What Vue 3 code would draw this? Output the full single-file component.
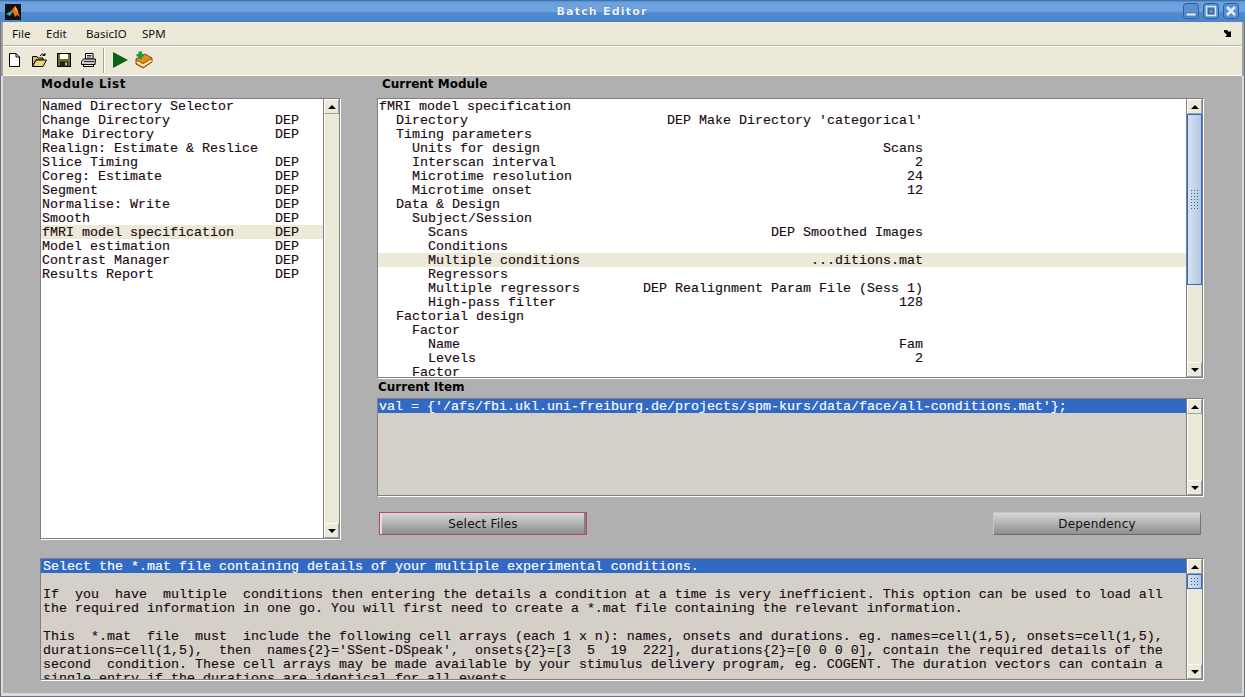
<script setup>
const menus = ['File', 'Edit', 'BasicIO', 'SPM']

const modules = [
  ['Named Directory Selector', ''],
  ['Change Directory', 'DEP'],
  ['Make Directory', 'DEP'],
  ['Realign: Estimate & Reslice', ''],
  ['Slice Timing', 'DEP'],
  ['Coreg: Estimate', 'DEP'],
  ['Segment', 'DEP'],
  ['Normalise: Write', 'DEP'],
  ['Smooth', 'DEP'],
  ['fMRI model specification', 'DEP'],
  ['Model estimation', 'DEP'],
  ['Contrast Manager', 'DEP'],
  ['Results Report', 'DEP'],
]

const settings = [
  ['fMRI model specification', ''],
  ['  Directory', "DEP Make Directory 'categorical'"],
  ['  Timing parameters', ''],
  ['    Units for design', 'Scans'],
  ['    Interscan interval', '2'],
  ['    Microtime resolution', '24'],
  ['    Microtime onset', '12'],
  ['  Data & Design', ''],
  ['    Subject/Session', ''],
  ['      Scans', 'DEP Smoothed Images'],
  ['      Conditions', ''],
  ['      Multiple conditions', '...ditions.mat'],
  ['      Regressors', ''],
  ['      Multiple regressors', 'DEP Realignment Param File (Sess 1)'],
  ['      High-pass filter', '128'],
  ['  Factorial design', ''],
  ['    Factor', ''],
  ['      Name', 'Fam'],
  ['      Levels', '2'],
  ['    Factor', ''],
]

const helpLines = [
  'Select the *.mat file containing details of your multiple experimental conditions.',
  ' ',
  'If  you  have  multiple  conditions then entering the details a condition at a time is very inefficient. This option can be used to load all',
  'the required information in one go. You will first need to create a *.mat file containing the relevant information.',
  ' ',
  'This  *.mat  file  must  include the following cell arrays (each 1 x n): names, onsets and durations. eg. names=cell(1,5), onsets=cell(1,5),',
  "durations=cell(1,5),  then  names{2}='SSent-DSpeak',  onsets{2}=[3  5  19  222], durations{2}=[0 0 0 0], contain the required details of the",
  'second  condition. These cell arrays may be made available by your stimulus delivery program, eg. COGENT. The duration vectors can contain a',
  'single entry if the durations are identical for all events.',
]
</script>

<template>
  <div class="window">
    <header class="titlebar">
      <svg class="app-logo" width="16" height="16" viewBox="0 0 16 16">
        <rect width="16" height="16" fill="#111" />
        <path d="M1 10 L6 7 L8 8 L5 12 Z" fill="#3aa0b0" />
        <path d="M6 7 L10 2 L12 5 L15 13 L12 11 L10 13 L8 8 Z" fill="#e8701a" />
        <path d="M10 2 L12 5 L13 9 L10 6 Z" fill="#f6b02c" />
      </svg>
      <span class="title">Batch Editor</span>
      <div class="win-buttons">
        <svg width="16" height="16" viewBox="0 0 16 16">
          <rect x=".5" y=".5" width="15" height="15" rx="3" fill="#5a90d0" stroke="#2b5c9c" />
          <rect x="3" y="10" width="10" height="3" fill="#dfeaf6" stroke="#2b5c9c" stroke-width=".6" />
        </svg>
        <svg width="16" height="16" viewBox="0 0 16 16">
          <rect x=".5" y=".5" width="15" height="15" rx="3" fill="#5a90d0" stroke="#2b5c9c" />
          <rect x="3.5" y="3.5" width="9" height="9" fill="none" stroke="#dfeaf6" stroke-width="1.4" />
          <rect x="5.5" y="6" width="5" height="4.5" fill="none" stroke="#2b5c9c" />
        </svg>
        <svg width="16" height="16" viewBox="0 0 16 16">
          <rect x=".5" y=".5" width="15" height="15" rx="3" fill="#5a90d0" stroke="#2b5c9c" />
          <path d="M4 4 L12 12 M12 4 L4 12" stroke="#e6eff9" stroke-width="2.6" />
        </svg>
      </div>
    </header>

    <nav class="menubar">
      <span v-for="m in menus" :key="m" class="menu-item">{{ m }}</span>
      <svg class="dock-arrow" width="9" height="8" viewBox="0 0 9 8">
        <path d="M0 0 H3 L5 2 L7 1 V7 H1 L3 5 L0 2 Z" fill="#000" />
      </svg>
    </nav>

    <div class="toolbar">
      <svg width="16" height="16" viewBox="0 0 16 16">
        <path d="M3.5 1.5 H10 L13.5 5 V14.5 H3.5 Z" fill="#fff" stroke="#000" />
        <path d="M10 1.5 V5 H13.5" fill="none" stroke="#000" />
      </svg>
      <svg class="open-icon" width="17" height="16" viewBox="0 0 17 16">
        <path d="M1.5 4.5 H6 L7 6 H12 V8 H5 L1.5 14 Z" fill="#d8c060" stroke="#000" />
        <path d="M1.5 14.5 L5 8 H15.5 L12 14.5 Z" fill="#f0d878" stroke="#000" />
        <path d="M9 4 Q11 0.5 14 3 M14 1 V3.5 H11.5" fill="none" stroke="#000" />
      </svg>
      <svg width="16" height="16" viewBox="0 0 16 16">
        <rect x="1.5" y="1.5" width="13" height="13" fill="#6e6a20" stroke="#000" />
        <rect x="4" y="2" width="8" height="5" fill="#fff" />
        <rect x="4" y="9.5" width="8" height="5" fill="#222" />
        <rect x="9" y="10.5" width="2" height="3" fill="#bbb" />
      </svg>
      <svg width="17" height="16" viewBox="0 0 17 16">
        <path d="M5.5 1.5 H13 V7 H5.5 Z" fill="#fff" stroke="#000" />
        <path d="M3.5 7 H15.5 L15 12.5 H1.5 V9.5 Z" fill="#ccc" stroke="#000" />
        <path d="M3.5 12.5 H13.5 V14.5 H3.5 Z" fill="#fff" stroke="#000" />
        <path d="M7 3.5 H11.5 M7 5 H11.5 M4 9.5 H14" stroke="#000" stroke-width=".8" />
      </svg>
      <i class="tool-sep"></i>
      <svg width="15" height="16" viewBox="0 0 15 16">
        <path d="M0 0 L15 8 L0 16 Z" fill="#0a6414" />
      </svg>
      <svg class="book-icon" width="18" height="18" viewBox="0 0 18 18">
        <path d="M1 8 L10 3 L17 7 V11 L8 17 L1 13 Z" fill="#e88a1c" stroke="#7a4a10" />
        <path d="M2 11 L8 14.5 L16.5 9.5" fill="none" stroke="#f6ead0" stroke-width="1.8" />
        <path d="M1 8.5 L8 12.5 L17 7" fill="none" stroke="#a85f10" />
        <path d="M1.5 3 H3.5 V.5 H7 V3 H9 V5.5 H7 V8 H3.5 V5.5 H1.5 Z" fill="#1f9a34" />
      </svg>
    </div>

    <main class="content">
      <div class="upper">
        <section class="left-col">
          <h2 class="label label-list">Module List</h2>
          <div class="panel panel-list">
            <div class="rows">
              <div
                v-for="(row, i) in modules"
                :key="i"
                class="row"
                :class="{ first: i === 0, active: row[0] === 'fMRI model specification' }"
              >
                <span class="mod-name">{{ row[0] }}</span><span>{{ row[1] }}</span>
              </div>
            </div>
            <div class="scrollbar">
              <div class="arrow up"></div>
              <div class="track"></div>
              <div class="arrow down"></div>
            </div>
          </div>
        </section>

        <section class="right-col">
          <h2 class="label label-module">Current Module</h2>
          <div class="panel panel-module">
            <div class="rows">
              <div
                v-for="(row, i) in settings"
                :key="i"
                class="row setting"
                :class="{ first: i === 0, active: i === 11 }"
              >
                <span>{{ row[0] }}</span><span>{{ row[1] }}</span>
              </div>
            </div>
            <div class="scrollbar">
              <div class="arrow up"></div>
              <div class="thumb module-thumb"><i class="grip tall"></i></div>
              <div class="track"></div>
              <div class="arrow down"></div>
            </div>
          </div>

          <h2 class="label label-item">Current Item</h2>
          <div class="panel panel-item">
            <div class="rows">
              <div class="row selected">val = {'/afs/fbi.ukl.uni-freiburg.de/projects/spm-kurs/data/face/all-conditions.mat'};</div>
            </div>
            <div class="scrollbar">
              <div class="arrow up"></div>
              <div class="track"></div>
              <div class="arrow down"></div>
            </div>
          </div>

          <div class="actions">
            <button class="btn focused">Select Files</button>
            <button class="btn">Dependency</button>
          </div>
        </section>
      </div>

      <div class="panel panel-help">
        <div class="rows">
          <div v-for="(line, i) in helpLines" :key="i" class="row help-row" :class="{ selected: i === 0 }">{{ line }}</div>
        </div>
        <div class="scrollbar">
          <div class="arrow up"></div>
          <div class="thumb help-thumb"><i class="grip"></i></div>
          <div class="track"></div>
          <div class="arrow down"></div>
        </div>
      </div>
    </main>
  </div>
</template>

<style>
html,
body {
  margin: 0;
  height: 697px;
  overflow: hidden;
}
</style>

<style scoped>
.window {
  width: 1245px;
  height: 697px;
  box-sizing: border-box;
  display: flex;
  flex-direction: column;
  background: #9fa3a8;
  border-left: 1px solid #6f7378;
  border-right: 1px solid #6f7378;
  border-bottom: 1px solid #6f7378;
  font-family: "DejaVu Sans", sans-serif;
}

.titlebar {
  height: 22px;
  flex: none;
  margin: 0 -1px;
  padding: 0 5px;
  display: flex;
  align-items: center;
  background: linear-gradient(#2f659f 0, #6a9fdc 2px, #6fa4de 11px, #4f8acd 13px, #4a85c8 22px);
}

.app-logo {
  margin-top: 1px;
}

.title {
  flex: 1;
  text-align: center;
  color: #eef4fa;
  font-size: 11px;
  font-weight: 700;
  letter-spacing: 1.2px;
  text-shadow: 0 0 1px #2b5c9c;
}

.win-buttons {
  display: flex;
  gap: 4px;
  margin-right: 1px;
}

.win-buttons svg {
  display: block;
}

.menubar {
  height: 24px;
  box-sizing: border-box;
  flex: none;
  margin: 0 2px;
  padding-left: 9px;
  display: grid;
  grid-template-columns: 34px 40px 56px 40px 1fr;
  align-items: center;
  background: #ece9d8;
  border-bottom: 1px solid #b9b6a8;
  font-size: 11.5px;
  font-family: "Noto Sans", sans-serif;
  color: #111;
}

.dock-arrow {
  justify-self: end;
  margin-right: 9px;
}

.toolbar {
  height: 30px;
  box-sizing: border-box;
  flex: none;
  margin: 0 2px;
  padding: 0 0 2px 3px;
  display: flex;
  align-items: center;
  gap: 8px;
  background: #ece9d8;
  border-top: 1px solid #fff;
  border-bottom: 1px solid #fff;
}

.open-icon {
  margin-left: 1px;
}

.tool-sep {
  width: 1px;
  height: 25px;
  background: #a8a598;
  border-right: 1px solid #fff;
  margin-left: -2px;
}

.book-icon {
  margin-left: -1px;
}

.content {
  flex: 1;
  min-height: 0;
  padding-left: 37px;
  background: #b0b0b0;
  border-left: 2px solid #dcdcdc;
  border-right: 2px solid #dcdcdc;
  border-bottom: 3px solid #dcdcdc;
  overflow: hidden;
}

.upper {
  display: flex;
  gap: 36px;
}

.left-col {
  width: 301px;
}

.right-col {
  width: 827px;
}

.label {
  margin: 0;
  font-family: "DejaVu Sans", sans-serif;
  font-size: 12px;
  font-weight: 700;
  color: #000;
  padding-left: 1px;
}

.label-list {
  height: 22px;
  line-height: 17px;
  letter-spacing: 0.6px;
}

.label-module {
  height: 22px;
  line-height: 17px;
  padding-left: 5px;
}

.label-item {
  height: 20px;
  line-height: 18px;
}

.panel {
  display: flex;
  box-sizing: border-box;
  border: 1px solid #808080;
  box-shadow: 1px 1px 0 #fff;
  background: #fff;
  font-family: "Liberation Mono", monospace;
  font-size: 13.33px;
  line-height: 16px;
  color: #1a0a14;
  -webkit-text-stroke: 0.15px currentColor;
}

.panel-list {
  height: 441px;
  width: 300px;
}

.panel-module {
  height: 280px;
  width: 826px;
}

.panel-item {
  height: 98px;
  width: 826px;
  background: #d4d0c8;
}

.panel-help {
  height: 122px;
  width: 1163px;
  margin-top: 19px;
  background: #d4d0c8;
}

.rows {
  flex: 1;
  min-width: 0;
  overflow: hidden;
}

.row {
  height: 14px;
  padding-left: 1px;
  white-space: pre;
}

.panel-list .row {
  display: flex;
}

.mod-name {
  width: 233px;
}

.row.first {
  width: fit-content;
  margin-top: -1px;
  margin-left: -1px;
  padding-top: 1px;
  padding-left: 2px;
  padding-right: 2px;
  background: #fff;
}

.setting {
  display: flex;
  justify-content: space-between;
  padding-left: 2px;
  padding-right: 263px;
}

.row.first.setting {
  padding-right: 32px;
}

.help-row {
  padding-left: 2px;
}

.row.active {
  background: #ece9d8;
}

.row.selected {
  background: #316ac5;
  color: #fff;
}

.scrollbar {
  width: 15px;
  flex: none;
  display: flex;
  flex-direction: column;
  background: #ece9d8;
  border-left: 1px solid #808080;
}

.arrow {
  height: 15px;
  flex: none;
  box-sizing: border-box;
  display: flex;
  align-items: center;
  justify-content: center;
  background: #ece9d8;
  border: 1px solid #fff;
  border-right-color: #a0a0a0;
  border-bottom-color: #a0a0a0;
}

.arrow::after {
  content: "";
  border-left: 4px solid transparent;
  border-right: 4px solid transparent;
}

.arrow.up::after {
  border-bottom: 4px solid #000;
}

.arrow.down::after {
  border-top: 4px solid #000;
}

.track {
  flex: 1;
  border-left: 1px solid #fff;
}

.thumb {
  flex: none;
  box-sizing: border-box;
  display: flex;
  align-items: center;
  justify-content: center;
  background: linear-gradient(90deg, #d4e2f2, #b4c8e0);
  border: 1px solid #316ac5;
}

.module-thumb {
  height: 171px;
}

.help-thumb {
  height: 15px;
}

.grip {
  width: 9px;
  height: 9px;
  background-image: radial-gradient(circle, #44618c 0.7px, transparent 0.9px);
  background-size: 3px 3px;
}

.grip.tall {
  height: 21px;
}

.actions {
  display: flex;
  justify-content: space-between;
  padding: 0 3px 0 2px;
  margin-top: 16px;
}

.btn {
  width: 208px;
  height: 23px;
  box-sizing: border-box;
  padding: 1px 0 0;
  background: linear-gradient(#d6d6d6, #8e8e8e);
  border: 1px solid;
  border-color: #c4c4c4 #777 #6c6c6c #c4c4c4;
  font-family: "DejaVu Sans", sans-serif;
  font-size: 12px;
  letter-spacing: 0.2px;
  color: #111;
}

.btn.focused {
  border: 1px solid #b8487c;
  box-shadow: inset 2px 0 0 #e0e0e0, inset -2px 0 0 #808080;
}
</style>
